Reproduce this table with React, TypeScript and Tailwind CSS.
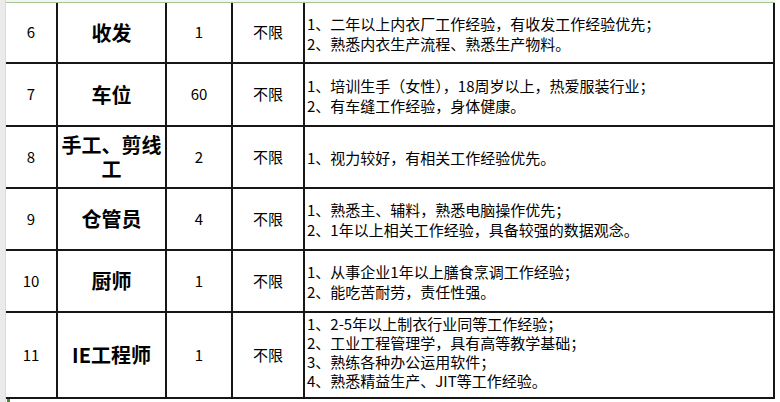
const rows = [
  {
    no: '6',
    title: '收发',
    count: '1',
    lines: ['1、二年以上内衣厂工作经验，有收发工作经验优先；', '2、熟悉内衣生产流程、熟悉生产物料。'],
  },
  {
    no: '7',
    title: '车位',
    count: '60',
    lines: ['1、培训生手（女性），18周岁以上，热爱服装行业；', '2、有车缝工作经验，身体健康。'],
  },
  {
    no: '8',
    title: '手工、剪线工',
    count: '2',
    lines: ['1、视力较好，有相关工作经验优先。'],
  },
  {
    no: '9',
    title: '仓管员',
    count: '4',
    lines: ['1、熟悉主、辅料，熟悉电脑操作优先；', '2、1年以上相关工作经验，具备较强的数据观念。'],
  },
  {
    no: '10',
    title: '厨师',
    count: '1',
    lines: ['1、从事企业1年以上膳食烹调工作经验；', '2、能吃苦耐劳，责任性强。'],
  },
  {
    no: '11',
    title: 'IE工程师',
    count: '1',
    lines: [
      '1、2-5年以上制衣行业同等工作经验；',
      '2、工业工程管理学，具有高等教学基础；',
      '3、熟练各种办公运用软件；',
      '4、熟悉精益生产、JIT等工作经验。',
    ],
  },
];

const font = { fontFamily: '"Noto Sans CJK SC", "Noto Sans", sans-serif' };

export default function App() {
  return (
    <div className="w-[780px] h-[402px] bg-white flex overflow-hidden text-black" style={font}>
      <div className="w-[6px] h-full bg-[#ebebeb] border-r border-[#dadada]" />
      <div className="flex flex-col">
        <div className="h-[2px] bg-[#f4f4f4]" />
        <div className="h-[1px] bg-[#a6c58d]" />
        <div className="grid grid-cols-[50px_107px_64px_70px_468px] grid-rows-[59px_61px_60px_60px_60px_84px] gap-[2px] bg-[#161616] pr-[2px] pb-[2px] w-fit">
          {rows.map((r, i) => {
            const last = i === rows.length - 1;
            return [
              <div key={r.no + 'a'} className="bg-white flex items-center justify-center text-[15px]">
                {r.no}
              </div>,
              <div
                key={r.no + 'b'}
                className="bg-white flex items-center justify-center text-center font-bold text-[20px] leading-[24px] px-[1px]"
              >
                {r.title}
              </div>,
              <div key={r.no + 'c'} className="bg-white flex items-center justify-center text-[15px]">
                {r.count}
              </div>,
              <div key={r.no + 'd'} className="bg-white flex items-center justify-center text-[15px]">
                不限
              </div>,
              <div
                key={r.no + 'e'}
                className={
                  last
                    ? 'bg-white flex flex-col justify-center pl-[2px] pb-[6px] text-[15px] leading-[19px] whitespace-nowrap'
                    : 'bg-white flex flex-col justify-center pl-[2px] pt-[2px] text-[15px] leading-[20px] whitespace-nowrap'
                }
              >
                {r.lines.map((l) => (
                  <div key={l}>{l}</div>
                ))}
              </div>,
            ];
          })}
        </div>
        <div className="h-[3px] flex">
          <div className="w-[3px] h-[3px] bg-[#4b8a2c] ml-[1px]" />
        </div>
      </div>
    </div>
  );
}
